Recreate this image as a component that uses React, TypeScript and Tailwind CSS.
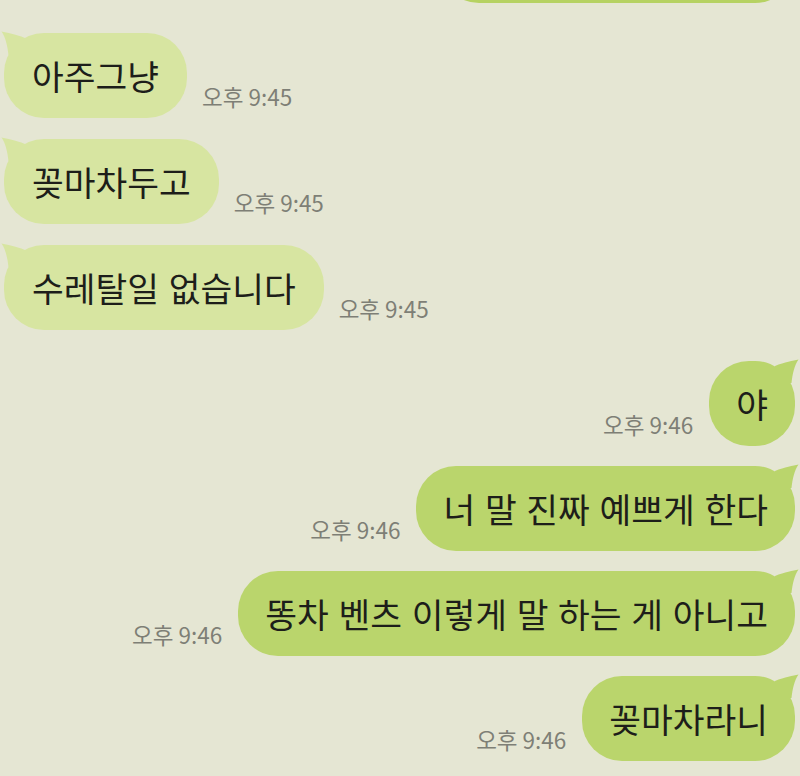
import React from "react";

const FONT = { fontFamily: '"Noto Sans CJK KR", "Noto Sans", sans-serif' };

type Msg = { side: "in" | "out"; text: string; time?: string };

const messages: Msg[] = [
  { side: "in", text: "아주그냥", time: "오후 9:45" },
  { side: "in", text: "꽂마차두고", time: "오후 9:45" },
  { side: "in", text: "수레탈일 없습니다", time: "오후 9:45" },
  { side: "out", text: "야", time: "오후 9:46" },
  { side: "out", text: "너 말 진짜 예쁘게 한다", time: "오후 9:46" },
  { side: "out", text: "똥차 벤츠 이렇게 말 하는 게 아니고", time: "오후 9:46" },
  { side: "out", text: "꽂마차라니", time: "오후 9:46" },
];

function Tail({ side, color }: { side: "in" | "out"; color: string }) {
  // small hook on the top corner, merging into the rounded bubble edge
  return (
    <svg
      width="30"
      height="30"
      viewBox="0 0 30 30"
      className={
        side === "in"
          ? "absolute -left-[3px] -top-[2px]"
          : "absolute -right-[4px] -top-[2px] -scale-x-100"
      }
      aria-hidden="true"
    >
      <path
        d="M0.5 0.5 C6 1.5 14 3 24 7 L24 24 L7.5 24 C6.5 15 4.5 6 0.5 0.5 Z"
        fill={color}
      />
    </svg>
  );
}

function Bubble({ msg }: { msg: Msg }) {
  const isIn = msg.side === "in";
  const color = isIn ? "#d7e5a1" : "#bad56c";
  return (
    <div className={isIn ? "flex items-end pl-[4px]" : "flex items-end justify-end pr-[5px]"}>
      {!isIn && msg.time && (
        <span className="mr-[16px] mb-[10px] text-[22.5px] leading-[24px] text-[#7e7f76]">{msg.time}</span>
      )}
      <div
        className={
          isIn
            ? "relative flex h-[85px] items-center rounded-[40px] bg-[#d7e5a1] px-[28px]"
            : "relative flex h-[85px] items-center rounded-[40px] bg-[#bad56c] px-[27px]"
        }
      >
        <Tail side={msg.side} color={color} />
        <span className="relative text-[34.5px] leading-none text-[#1d1e1a] [word-spacing:2px] whitespace-nowrap">
          {msg.text}
        </span>
      </div>
      {isIn && msg.time && (
        <span className="ml-[15px] mb-[10px] text-[22.5px] leading-[24px] text-[#7e7f76]">{msg.time}</span>
      )}
    </div>
  );
}

export default function App() {
  const incoming = messages.filter((m) => m.side === "in");
  const outgoing = messages.filter((m) => m.side === "out");

  return (
    <div className="h-[776px] w-[800px] overflow-hidden bg-[#e5e6d3]" style={FONT}>
      {/* previous outgoing bubble, scrolled mostly out of view */}
      <div className="-mt-[82px] flex justify-end pr-[5px]">
        <div className="h-[85px] w-[356px] rounded-[40px] bg-[#b6d262]" />
      </div>

      <div className="mt-[30px] flex flex-col gap-[21px]">
        {incoming.map((m, i) => (
          <Bubble key={i} msg={m} />
        ))}
      </div>

      <div className="mt-[31px] flex flex-col gap-[20px]">
        {outgoing.map((m, i) => (
          <Bubble key={i} msg={m} />
        ))}
      </div>
    </div>
  );
}
